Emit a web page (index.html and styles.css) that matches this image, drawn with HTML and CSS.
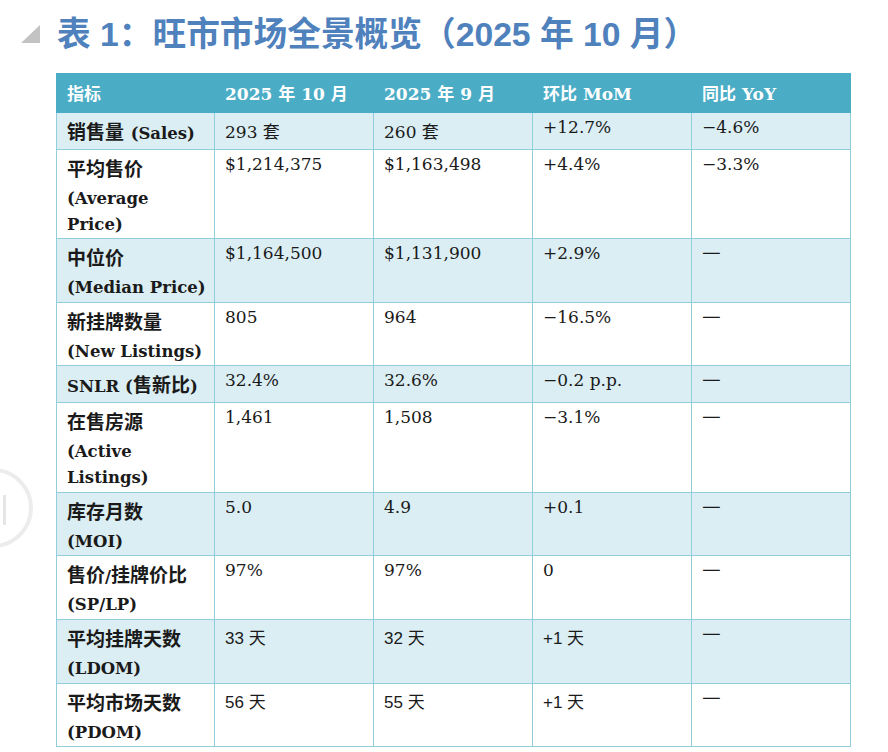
FILE: index.html
```html
<!DOCTYPE html>
<html lang="zh">
<head>
<meta charset="utf-8">
<link rel="stylesheet" href="styles.css">
</head>
<body>
<div class="side-button"><span class="bar"></span></div>
<h1 class="title">
  <svg class="marker" width="19" height="18" viewBox="0 0 19 18"><polygon points="0,18 19,18 19,0" fill="#c3c3c3"/></svg>
  <span>表 1：旺市市场全景概览（2025 年 10 月）</span>
</h1>
<table class="grid">
  <colgroup><col class="c1"><col class="c2"><col class="c2"><col class="c2"><col class="c2"></colgroup>
  <thead>
    <tr><th>指标</th><th>2025 年 10 月</th><th>2025 年 9 月</th><th>环比 MoM</th><th>同比 YoY</th></tr>
  </thead>
  <tbody>
    <tr class="alt">
      <td class="label one"><div class="zh">销售量 <span class="lat">(Sales)</span></div></td>
      <td class="z">293 套</td><td class="z">260 套</td><td>+12.7%</td><td>−4.6%</td>
    </tr>
    <tr>
      <td class="label one"><div class="zh">平均售价</div><div class="en">(Average</div><div class="en">Price)</div></td>
      <td>$1,214,375</td><td>$1,163,498</td><td>+4.4%</td><td>−3.3%</td>
    </tr>
    <tr class="alt">
      <td class="label"><div class="zh">中位价</div><div class="en">(Median Price)</div></td>
      <td>$1,164,500</td><td>$1,131,900</td><td>+2.9%</td><td class="dash">—</td>
    </tr>
    <tr>
      <td class="label one"><div class="zh">新挂牌数量</div><div class="en">(New Listings)</div></td>
      <td>805</td><td>964</td><td>−16.5%</td><td class="dash">—</td>
    </tr>
    <tr class="alt">
      <td class="label one"><div class="zh"><span class="lat">SNLR (</span>售新比<span class="lat">)</span></div></td>
      <td>32.4%</td><td>32.6%</td><td>−0.2 p.p.</td><td class="dash">—</td>
    </tr>
    <tr>
      <td class="label"><div class="zh">在售房源</div><div class="en">(Active</div><div class="en">Listings)</div></td>
      <td>1,461</td><td>1,508</td><td>−3.1%</td><td class="dash">—</td>
    </tr>
    <tr class="alt">
      <td class="label one"><div class="zh">库存月数</div><div class="en">(MOI)</div></td>
      <td>5.0</td><td>4.9</td><td>+0.1</td><td class="dash">—</td>
    </tr>
    <tr>
      <td class="label"><div class="zh">售价<span class="lat">/</span>挂牌价比</div><div class="en">(SP/LP)</div></td>
      <td>97%</td><td>97%</td><td>0</td><td class="dash">—</td>
    </tr>
    <tr class="alt">
      <td class="label"><div class="zh">平均挂牌天数</div><div class="en">(LDOM)</div></td>
      <td class="z sans">33 天</td><td class="z sans">32 天</td><td class="z sans">+1 天</td><td class="dash">—</td>
    </tr>
    <tr>
      <td class="label one"><div class="zh">平均市场天数</div><div class="en">(PDOM)</div></td>
      <td class="z sans">56 天</td><td class="z sans">55 天</td><td class="z sans">+1 天</td><td class="dash">—</td>
    </tr>
  </tbody>
</table>
</body>
</html>
```

FILE: styles.css
```css
html, body {
  margin: 0;
  padding: 0;
  background: #ffffff;
}
body {
  font-family: "DejaVu Serif", "Noto Sans CJK SC", serif;
  color: #1a1a1a;
  position: relative;
  min-height: 752px;
  overflow: hidden;
}
.side-button {
  position: absolute;
  left: -47px;
  top: 468px;
  width: 80px;
  height: 80px;
  box-sizing: border-box;
  border: 4px solid #ececec;
  border-radius: 50%;
}
.side-button .bar {
  position: absolute;
  left: 46px;
  top: 23px;
  width: 3px;
  height: 30px;
  background: #e6e6e6;
}
.title {
  margin: 0;
  height: 73px;
  display: flex;
  align-items: flex-start;
  font-family: "Liberation Sans", "Noto Sans CJK SC", sans-serif;
  font-weight: bold;
  font-size: 33.7px;
  line-height: 38px;
  color: #4f81bd;
  padding-top: 15px;
  box-sizing: border-box;
}
.marker {
  margin: 10px 17px 0 21px;
  flex: none;
}
.grid {
  margin-left: 56px;
  width: 795px;
  border-collapse: collapse;
  table-layout: fixed;
  font-size: 17px;
}
.c1 { width: 158px; }
.c2 { width: 159px; }
.grid th {
  background: #4bacc6;
  color: #ffffff;
  font-weight: bold;
  text-align: left;
  height: 36px;
  padding: 0 10px 2px 10px;
  border: 1px solid #4bacc6;
  font-size: 17px;
  vertical-align: middle;
}
.grid td {
  border: 1px solid #92cddc;
  padding: 1px 6px 0 10px;
  vertical-align: top;
  line-height: 26px;
  white-space: nowrap;
}
.grid tr.alt td {
  background: #daeef3;
}
.grid td.z {
  line-height: 34px;
  padding-top: 2px;
}
.grid td.label {
  font-weight: bold;
  font-size: 16.5px;
  padding-top: 2px;
  padding-bottom: 1px;
}
.grid td.label.one {
  padding-bottom: 0;
}
.label .zh {
  line-height: 34px;
  font-size: 19px;
}
.label .lat {
  font-size: 16.5px;
  line-height: 18px;
}
.label .en {
  line-height: 26px;
}
.grid td.sans {
  font-family: "Liberation Sans", "Noto Sans CJK SC", sans-serif;
  font-size: 17px;
}
.grid td.dash {
  font-family: "Noto Sans CJK SC", sans-serif;
  font-size: 21px;
  line-height: 20px;
  padding-top: 1px;
}
```
